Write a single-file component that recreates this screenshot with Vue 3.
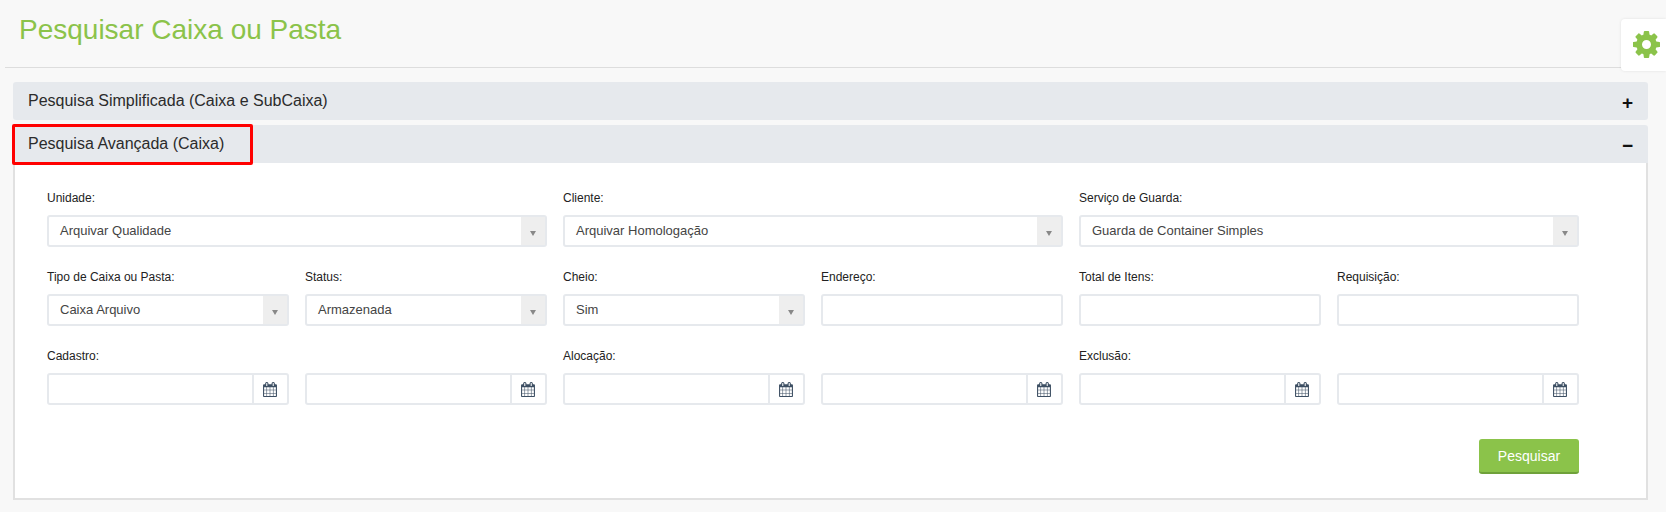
<template>
    <div class="page">
        <header class="page-header">
            <h1>Pesquisar Caixa ou Pasta</h1>
        </header>

        <!-- Settings tab -->
        <div class="settings-tab">
            <svg viewBox="0 0 1536 1536" class="gear">
                <path d="M1024 768q0-106-75-181t-181-75-181 75-75 181 75 181 181 75 181-75 75-181zm512-109v222q0 12-8 23t-20 13l-185 28q-19 54-39 91 35 50 107 138 10 12 10 25t-9 23q-27 37-99 108t-94 71q-12 0-26-9l-138-108q-44 23-91 38-16 136-29 186-7 28-36 28h-222q-14 0-24.5-8.5t-11.5-21.5l-28-184q-49-16-90-37l-141 107q-10 9-25 9-14 0-25-11-126-114-165-168-7-10-7-23 0-12 8-23 15-21 51-66.5t54-70.5q-27-50-41-99l-183-27q-13-2-21-12.5t-8-23.5v-222q0-12 8-23t19-13l186-28q14-46 39-92-40-57-107-138-10-12-10-24 0-10 9-23 26-36 98.5-107.5t94.5-71.5q13 0 26 10l138 107q44-23 91-38 16-136 29-186 7-28 36-28h222q14 0 24.5 8.5t11.5 21.5l28 184q49 16 90 37l142-107q9-9 24-9 13 0 25 10 129 119 165 170 7 8 7 22 0 12-8 23-15 21-51 66.5t-54 70.5q26 50 41 98l183 28q13 2 21 12.5t8 23.5z" />
            </svg>
        </div>

        <main class="content">
            <section class="panel">
                <div class="panel-heading">
                    <span>Pesquisa Simplificada (Caixa e SubCaixa)</span>
                    <span class="toggle">+</span>
                </div>
            </section>

            <section class="panel open">
                <div class="panel-heading">
                    <span>Pesquisa Avançada (Caixa)</span>
                    <span class="toggle">−</span>
                    <div class="highlight"></div>
                </div>
                <div class="panel-body">
                    <div class="form-grid">
                        <div v-for="(field, index) in fields" :key="index" class="field" :class="{ wide: field.wide }">
                            <label>{{ field.label }}</label>

                            <div v-if="field.type === 'select'" class="control select">
                                <span class="value">{{ field.value }}</span>
                                <span class="select-arrow"><i></i></span>
                            </div>

                            <div v-else-if="field.type === 'date'" class="control date">
                                <span class="value"></span>
                                <span class="date-addon">
                                    <svg viewBox="0 0 1664 1792" class="calendar">
                                        <path d="M128 1664h288v-288h-288v288zm352 0h320v-288h-320v288zm-352-352h288v-320h-288v320zm352 0h320v-320h-320v320zm-352-384h288v-288h-288v288zm736 736h320v-288h-320v288zm-384-736h320v-288h-320v288zm768 736h288v-288h-288v288zm-384-352h320v-320h-320v320zm-352-864v-288q0-13-9.5-22.5t-22.5-9.5h-64q-13 0-22.5 9.5t-9.5 22.5v288q0 13 9.5 22.5t22.5 9.5h64q13 0 22.5-9.5t9.5-22.5zm736 864h288v-320h-288v320zm-384-384h320v-288h-320v288zm384 0h288v-288h-288v288zm32-480v-288q0-13-9.5-22.5t-22.5-9.5h-64q-13 0-22.5 9.5t-9.5 22.5v288q0 13 9.5 22.5t22.5 9.5h64q13 0 22.5-9.5t9.5-22.5zm384-64v1280q0 52-38 90t-90 38h-1408q-52 0-90-38t-38-90v-1280q0-52 38-90t90-38h128v-96q0-66 47-113t113-47h64q66 0 113 47t47 113v96h384v-96q0-66 47-113t113-47h64q66 0 113 47t47 113v96h128q52 0 90 38t38 90z" />
                                    </svg>
                                </span>
                            </div>

                            <div v-else class="control text"></div>
                        </div>
                    </div>

                    <div class="actions">
                        <button class="btn-search">Pesquisar</button>
                    </div>
                </div>
            </section>
        </main>
    </div>
</template>

<script setup>
const fields = [
    { label: 'Unidade:', type: 'select', value: 'Arquivar Qualidade', wide: true },
    { label: 'Cliente:', type: 'select', value: 'Arquivar Homologação', wide: true },
    { label: 'Serviço de Guarda:', type: 'select', value: 'Guarda de Container Simples', wide: true },
    { label: 'Tipo de Caixa ou Pasta:', type: 'select', value: 'Caixa Arquivo' },
    { label: 'Status:', type: 'select', value: 'Armazenada' },
    { label: 'Cheio:', type: 'select', value: 'Sim' },
    { label: 'Endereço:', type: 'text' },
    { label: 'Total de Itens:', type: 'text' },
    { label: 'Requisição:', type: 'text' },
    { label: 'Cadastro:', type: 'date' },
    { label: '', type: 'date' },
    { label: 'Alocação:', type: 'date' },
    { label: '', type: 'date' },
    { label: 'Exclusão:', type: 'date' },
    { label: '', type: 'date' },
];
</script>

<style>
html, body {
    margin: 0;
    background: #f8f8f8;
}
</style>

<style scoped>
.page {
    position: relative;
    height: 512px;
    overflow: hidden;
    background: #f8f8f8;
    font-family: "Liberation Sans", Arial, sans-serif;
    color: #222;
}

.page-header {
    margin-left: 5px;
    height: 68px;
    box-sizing: border-box;
    padding: 14px 0 0 14px;
    border-bottom: 1px solid #ddd;
}

.page-header h1 {
    margin: 0;
    font-size: 28px;
    line-height: 32px;
    font-weight: 400;
    color: #8bc34a;
}

.settings-tab {
    position: absolute;
    top: 19px;
    right: 0;
    width: 45px;
    height: 52px;
    box-sizing: border-box;
    padding: 0 0 2px 5px;
    background: #fff;
    border-radius: 4px 0 0 4px;
    box-shadow: 0 0 3px rgba(0, 0, 0, 0.1);
    display: flex;
    align-items: center;
    justify-content: center;
}

.gear {
    width: 27px;
    height: 27px;
    fill: #8bc34a;
}

.content {
    padding: 14px 18px 0 13px;
}

.panel + .panel {
    margin-top: 5px;
}

.panel-heading {
    position: relative;
    height: 38px;
    box-sizing: border-box;
    padding: 0 15px;
    display: flex;
    align-items: center;
    justify-content: space-between;
    background: #e6e9ed;
    border-radius: 3px;
    font-size: 16px;
    color: #2b2b2b;
}

.open .panel-heading {
    border-radius: 3px 3px 0 0;
}

.toggle {
    padding-top: 2px;
    font-size: 19px;
    font-weight: 700;
    line-height: 1;
    color: #111;
}

.highlight {
    position: absolute;
    top: -1px;
    left: -1px;
    width: 241px;
    height: 41px;
    box-sizing: border-box;
    border: 3px solid #f00;
    border-radius: 2px;
}

.panel-body {
    box-sizing: border-box;
    height: 337px;
    padding: 25px 67px 0 32px;
    background: #fff;
    border: 2px solid #e1e1e1;
    border-top: 0;
}

.form-grid {
    display: grid;
    grid-template-columns: repeat(6, 242px);
    column-gap: 16px;
    row-gap: 20px;
}

.field.wide {
    grid-column: span 2;
}

.field label {
    display: block;
    height: 18px;
    margin-bottom: 9px;
    font-size: 12px;
    line-height: 20px;
    color: #222;
}

.control {
    height: 32px;
    box-sizing: border-box;
    display: flex;
    background: #fff;
    border: 2px solid #e6e9ed;
    border-radius: 3px;
}

.value {
    flex: 1;
    padding-left: 11px;
    font-size: 13px;
    line-height: 27px;
    color: #444;
}

.select-arrow {
    width: 24px;
    background: #eee;
    display: flex;
    align-items: center;
    justify-content: center;
    padding-top: 4px;
    box-sizing: border-box;
}

.select-arrow i {
    width: 0;
    height: 0;
    border-left: 3px solid transparent;
    border-right: 3px solid transparent;
    border-top: 5px solid #888;
}

.date-addon {
    width: 35px;
    box-sizing: border-box;
    padding-right: 2px;
    border-left: 2px solid #e6e9ed;
    display: flex;
    align-items: center;
    justify-content: center;
}

.calendar {
    width: 14px;
    height: 15px;
    fill: #3d4f63;
}

.actions {
    display: flex;
    justify-content: flex-end;
    margin-top: 34px;
}

.btn-search {
    width: 100px;
    height: 35px;
    border: 0;
    border-bottom: 2px solid #6fa13a;
    border-radius: 3px;
    background: #8bc34a;
    color: #fff;
    font-family: inherit;
    font-size: 14px;
}
</style>
